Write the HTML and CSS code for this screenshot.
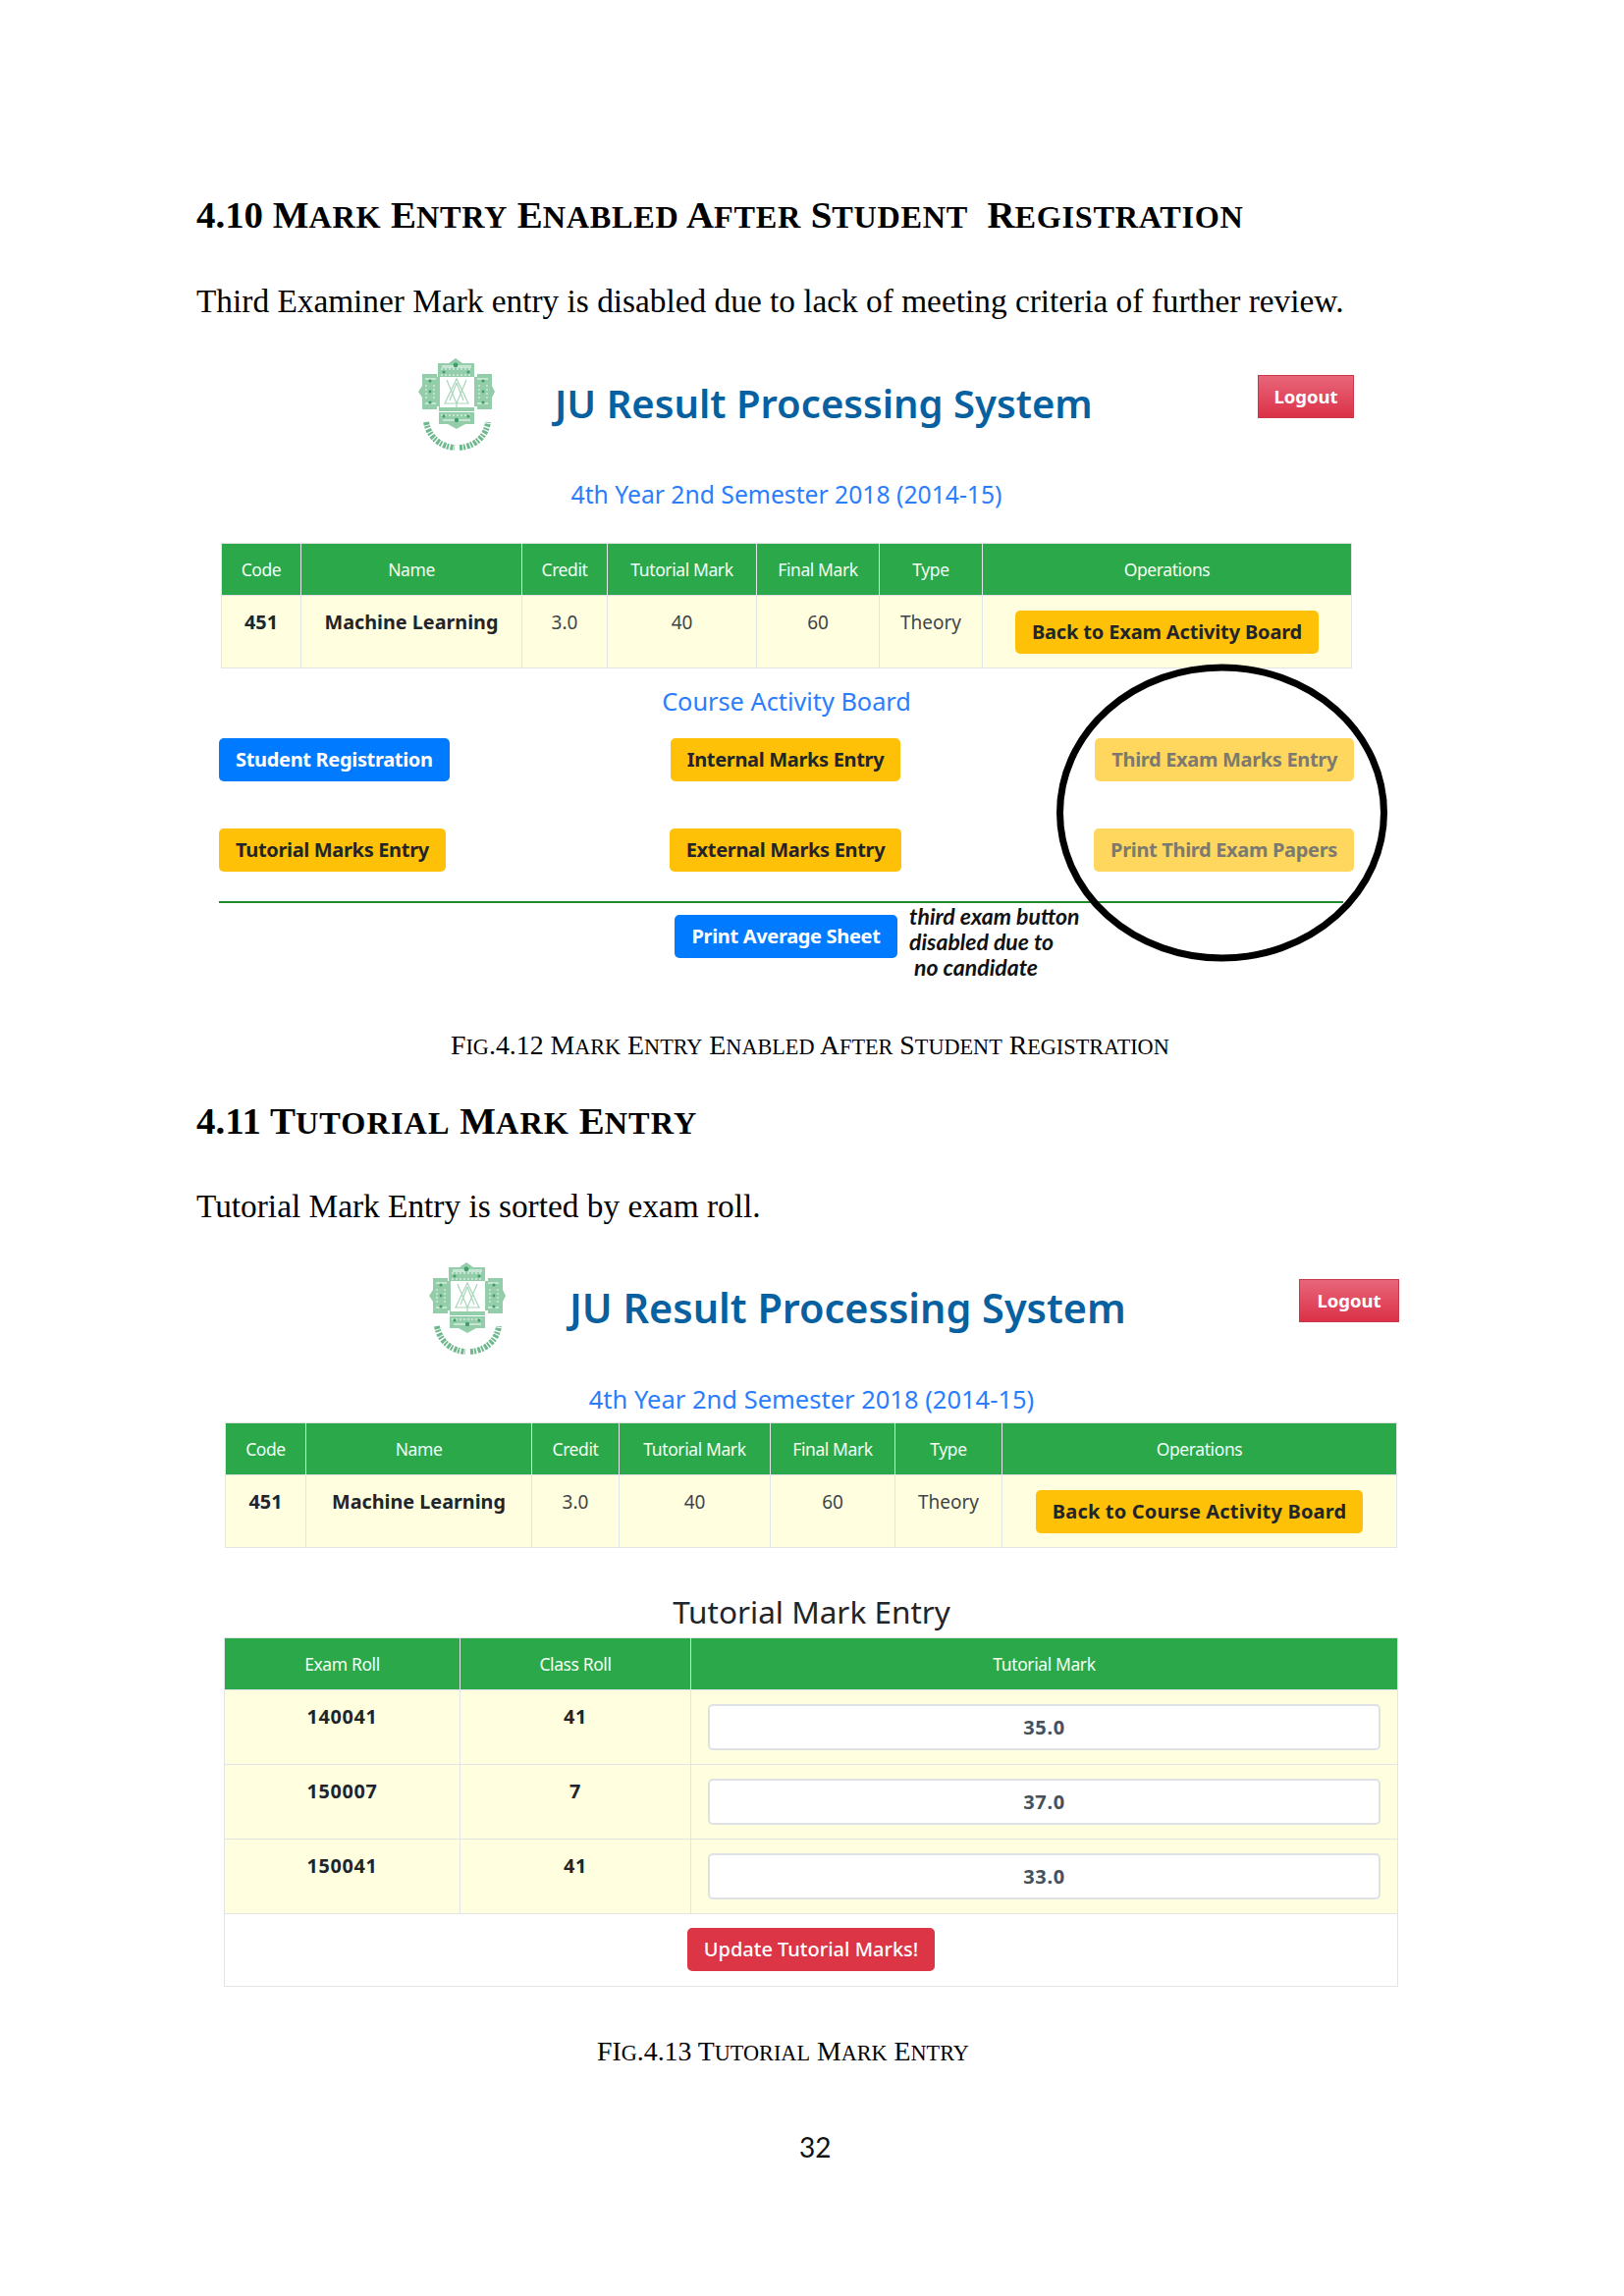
FILE: index.html
```html
<!DOCTYPE html>
<html lang="en">
<head>
<meta charset="utf-8">
<title>Mark Entry</title>
<link rel="stylesheet" href="styles.css">
</head>
<body>
<svg class="defs" width="0" height="0" aria-hidden="true">
  <symbol id="ju-logo" viewBox="0 0 80 95">
    <path class="lg-fill" d="M21 6h11l7-5 7 5h12v14h3V17h15v12l3 6-3 6v12H61v-3h-3v5H22v-5h-2v3H5V41l-4-6 4-6V17h15v3h1z"/>
    <path class="lg-fill" d="M22 56h36v12h-9l-9 5-9-5h-9z"/>
    <rect class="lg-white" x="23" y="20" width="35" height="31"/>
    <path class="lg-line" d="M40 22 28 47h24zM40 26l-7 18M40 26l7 18M30 23l10 24M50 23 40 47M40 47v4"/>
    <path class="lg-light" d="M25 8h30v3H25zM8 21h11v2H8zM61 21h11v2H61zM8 46h11v2H8zM61 46h11v2H61zM26 63h28v2H26z"/>
    <path class="lg-mottle" d="M24 12h32M24 18h32M9 28v16M17 28v16M63 28v16M71 28v16M24 59h32"/>
    <g class="lg-dot">
      <circle cx="39" cy="8" r="2.4"/><circle cx="27" cy="15" r="1.5"/><circle cx="52" cy="15" r="1.5"/>
      <circle cx="13" cy="24" r="1.6"/><circle cx="13" cy="35" r="1.4"/><circle cx="13" cy="46" r="1.6"/>
      <circle cx="67" cy="24" r="1.6"/><circle cx="67" cy="35" r="1.4"/><circle cx="67" cy="46" r="1.6"/>
      <circle cx="27" cy="60" r="1.5"/><circle cx="52" cy="60" r="1.5"/><circle cx="40" cy="64" r="2.2"/>
    </g>
    <path class="lg-text" d="M9 66C12 82 24 91 38 92M43 92C57 91 70 82 72 66"/>
  </symbol>
</svg>

<main class="page">
  <h2 class="heading heading-first">4.10 M<span class="sc">ark</span> E<span class="sc">ntry</span> E<span class="sc">nabled</span> A<span class="sc">fter</span> S<span class="sc">tudent</span>&nbsp; R<span class="sc">egistration</span></h2>
  <p class="para para-first">Third Examiner Mark entry is disabled due to lack of meeting criteria of further review.</p>

  <section class="shot shot-a">
    <svg class="ring" viewBox="0 0 337 302" aria-hidden="true"><ellipse cx="168.5" cy="151" rx="165" ry="148"/></svg>
    <header class="brand brand-a">
      <svg class="logo"><use href="#ju-logo"/></svg>
      <h1 class="app-title">JU Result Processing System</h1>
      <a class="logout">Logout</a>
    </header>
    <h3 class="term term-a">4th Year 2nd Semester 2018 (2014-15)</h3>
    <table class="grid grid-a">
      <colgroup><col class="a1"><col class="a2"><col class="a3"><col class="a4"><col class="a5"><col class="a6"><col></colgroup>
      <thead><tr><th>Code</th><th>Name</th><th>Credit</th><th>Tutorial Mark</th><th>Final Mark</th><th>Type</th><th>Operations</th></tr></thead>
      <tbody><tr><td class="b">451</td><td class="b">Machine Learning</td><td>3.0</td><td>40</td><td>60</td><td>Theory</td><td class="op"><a class="btn warn">Back to Exam Activity Board</a></td></tr></tbody>
    </table>
    <h3 class="board-title">Course Activity Board</h3>
    <div class="board">
      <a class="btn blue">Student Registration</a>
      <a class="btn warn">Internal Marks Entry</a>
      <a class="btn warn off">Third Exam Marks Entry</a>
      <a class="btn warn">Tutorial Marks Entry</a>
      <a class="btn warn">External Marks Entry</a>
      <a class="btn warn off">Print Third Exam Papers</a>
    </div>
    <hr class="rule">
    <div class="after-rule">
      <a class="btn blue">Print Average Sheet</a>
      <p class="note">third exam button<br>disabled due to<br><span class="note-in">no candidate</span></p>
    </div>
  </section>

  <p class="caption caption-a">F<span class="sc">ig</span>.4.12 M<span class="sc">ark</span> E<span class="sc">ntry</span> E<span class="sc">nabled</span> A<span class="sc">fter</span> S<span class="sc">tudent</span> R<span class="sc">egistration</span></p>

  <h2 class="heading heading-second">4.11 T<span class="sc">utorial</span> M<span class="sc">ark</span> E<span class="sc">ntry</span></h2>
  <p class="para para-second">Tutorial Mark Entry is sorted by exam roll.</p>

  <section class="shot shot-b">
    <header class="brand brand-b">
      <svg class="logo"><use href="#ju-logo"/></svg>
      <h1 class="app-title">JU Result Processing System</h1>
      <a class="logout">Logout</a>
    </header>
    <h3 class="term term-b">4th Year 2nd Semester 2018 (2014-15)</h3>
    <table class="grid grid-b">
      <colgroup><col class="b1"><col class="b2"><col class="b3"><col class="b4"><col class="b5"><col class="b6"><col></colgroup>
      <thead><tr><th>Code</th><th>Name</th><th>Credit</th><th>Tutorial Mark</th><th>Final Mark</th><th>Type</th><th>Operations</th></tr></thead>
      <tbody><tr><td class="b">451</td><td class="b">Machine Learning</td><td>3.0</td><td>40</td><td>60</td><td>Theory</td><td class="op"><a class="btn warn">Back to Course Activity Board</a></td></tr></tbody>
    </table>
    <h3 class="entry-title">Tutorial Mark Entry</h3>
    <table class="grid grid-c">
      <colgroup><col class="c1"><col class="c2"><col></colgroup>
      <thead><tr><th>Exam Roll</th><th>Class Roll</th><th>Tutorial Mark</th></tr></thead>
      <tbody>
        <tr><td class="b">140041</td><td class="b">41</td><td class="mark"><div class="input">35.0</div></td></tr>
        <tr><td class="b">150007</td><td class="b">7</td><td class="mark"><div class="input">37.0</div></td></tr>
        <tr><td class="b">150041</td><td class="b">41</td><td class="mark"><div class="input">33.0</div></td></tr>
      </tbody>
      <tfoot><tr><td colspan="3" class="submit"><a class="btn danger">Update Tutorial Marks!</a></td></tr></tfoot>
    </table>
  </section>

  <p class="caption caption-b">FI<span class="sc">g</span>.4.13 T<span class="sc">utorial</span> M<span class="sc">ark</span> E<span class="sc">ntry</span></p>
  <p class="page-no">32</p>
</main>
</body>
</html>
```
FILE: styles.css
```css
* { box-sizing: border-box; }
html, body { margin: 0; padding: 0; background: #fff; }
.defs { position: absolute; }
.page { width: 1654px; height: 2339px; overflow: hidden; font-family: "Liberation Serif", serif; color: #000; }
.sc { font-size: .8em; line-height: 1; text-transform: uppercase; }
.heading .sc { font-size: .83em; letter-spacing: .7px; }
.heading-second .sc { letter-spacing: 1.1px; }

.heading { margin: 0 0 0 200px; font: bold 38.9px/46px "Liberation Serif", serif; white-space: nowrap; }
.heading-first { padding-top: 196px; }
.heading-second { margin-top: 38px; }
.para { margin: 0 0 0 200px; font: 33.35px/40px "Liberation Serif", serif; white-space: nowrap; }
.para-first { margin-top: 45px; }
.para-second { margin-top: 44px; }

.shot { position: relative; font-family: "Noto Sans", sans-serif; }
.shot-a { margin: 0 0 0 223px; width: 1156px; padding-top: 37px; }
.shot-b { margin: 0 0 0 228px; width: 1197px; padding-top: 36px; }
.ring { position: absolute; left: 853px; top: 350px; width: 337px; height: 302px; overflow: visible; }
.ring ellipse { fill: none; stroke: #000; stroke-width: 7px; }

.brand { display: flex; align-items: flex-start; height: 96px; }
.brand-a { padding-left: 202px; }
.brand-b { padding-left: 208px; }
.logo { width: 80px; height: 95px; flex: none; }
.lg-fill { fill: #93cdaa; }
.lg-white { fill: #fff; }
.lg-line { fill: none; stroke: #a9d6bb; stroke-width: 1.2px; }
.lg-light { fill: #c6e5d3; }
.lg-mottle { fill: none; stroke: #d5ecdf; stroke-width: 1.4px; stroke-dasharray: 2 2; }
.lg-dot { fill: #3f9d6a; }
.lg-text { fill: none; stroke: #6fb88e; stroke-width: 6px; stroke-dasharray: 3 1 2 1.5; }

.app-title { margin: 21px 0 0 60px; font-size: 40px; line-height: 52px; font-weight: 600; color: #07609f; white-space: nowrap; }
.brand-b .app-title { margin-left: 64px; font-size: 41.4px; }
.logout { display: block; width: 98px; height: 44px; margin: 18px 0 0 auto; border: 1px solid #c9374b; background: linear-gradient(#e8667a, #db3147); color: #fff; font-size: 18.5px; font-weight: 700; line-height: 41px; text-align: center; }
.brand-b .logout { width: 102px; margin-top: 18px; margin-left: auto; }

.term { margin: 0; text-align: center; color: #2a7dfb; font-size: 24.7px; font-weight: 400; line-height: 36px; white-space: nowrap; }
.term-a { margin-top: 26px; }
.term-b { margin-top: 26px; font-size: 25.5px; }

.grid { border-collapse: collapse; table-layout: fixed; font-size: 19px; }
.grid th, .grid td { border: 1.5px solid #e2e5e8; text-align: center; }
.grid th { height: 53px; padding: 0; background: #2ba84a; color: #f2fff5; font-weight: 400; font-size: 17.5px; letter-spacing: -.4px; }
.grid td { padding: 14px 0 0; vertical-align: top; background: #ffffe0; color: #3f4448; line-height: 26px; }
.grid td.b { color: #212529; font-size: 19.8px; font-weight: 700; }
.grid-a { margin: 31px 0 0 2px; width: 1152px; }
.grid-a td { height: 74px; }
.grid-a .btn { letter-spacing: -.16px; }
.a1 { width: 81px; } .a2 { width: 225px; } .a3 { width: 87px; } .a4 { width: 152px; } .a5 { width: 125px; } .a6 { width: 105px; }
.grid-b { margin: 6px 0 0 1px; width: 1194px; }
.grid-b td { height: 74px; }
.grid-b .btn { letter-spacing: .17px; }
.b1 { width: 82px; } .b2 { width: 230px; } .b3 { width: 89px; } .b4 { width: 154px; } .b5 { width: 127px; } .b6 { width: 109px; }
.grid-c { margin: 6px 0 0; width: 1196px; }
.grid-c tbody td { height: 76px; }
.grid-c td.b { letter-spacing: .7px; }
.c1 { width: 240px; } .c2 { width: 235px; }
.grid td.op { padding: 15px 0 0; }
.grid td.mark { padding: 14px 17px 0; }
.grid td.submit { height: 74px; padding: 14px 0 0; background: #fff; }

.btn { display: inline-block; height: 44px; padding: 0 17px; border-radius: 5px; font-size: 20px; font-weight: 700; line-height: 44px; white-space: nowrap; letter-spacing: -.33px; text-align: center; }
.warn { background: #ffc107; color: #212529; }
.blue { background: #007bff; color: #fff; }
.danger { background: #dc3545; color: #fff; font-weight: 500; letter-spacing: 0; }
.off { background: #ffd75f; color: #7c7a70; }
.grid td .warn { color: #212529; }
.grid td .danger { color: #fff; }

.input { height: 47px; border: 2px solid #dee2e6; border-radius: 5px; background: #fff; color: #495057; font-size: 20px; font-weight: 700; letter-spacing: .7px; line-height: 44px; }

.board-title { margin: 15px 0 0; text-align: center; color: #2a7dfb; font-size: 25.3px; font-weight: 400; line-height: 36px; }
.entry-title { margin: 45px 0 0; text-align: center; color: #212529; font-size: 31.5px; font-weight: 400; line-height: 40px; }
.board { display: grid; grid-template-columns: 317px 520px 319px; row-gap: 48px; margin-top: 20px; }
.board > :nth-child(3n+2) { justify-self: center; }
.board > :nth-child(3n) { justify-self: end; }
.board > :nth-child(3n+1) { justify-self: start; }
.rule { height: 2px; margin: 30px 0 0; border: 0; background: #1f8a2a; width: 1145px; }
.after-rule { display: flex; align-items: flex-start; padding-left: 464px; height: 72px; }
.after-rule .btn { margin-top: 12px; padding: 0 17.5px; }
.note { margin: 0 0 0 12px; font: italic 700 23px/26px Lato, sans-serif; color: #111; white-space: nowrap; }
.note-in { padding-left: 5px; }

.caption { margin: 0; font: 27.8px/32px "Liberation Serif", serif; white-space: nowrap; }
.caption-a { margin: 57px 0 0 459px; }
.caption-b { margin: 50px 0 0 608px; }
.page-no { margin: 64px 0 0 814px; font: 28px/34px Lato, sans-serif; color: #111; }
```
